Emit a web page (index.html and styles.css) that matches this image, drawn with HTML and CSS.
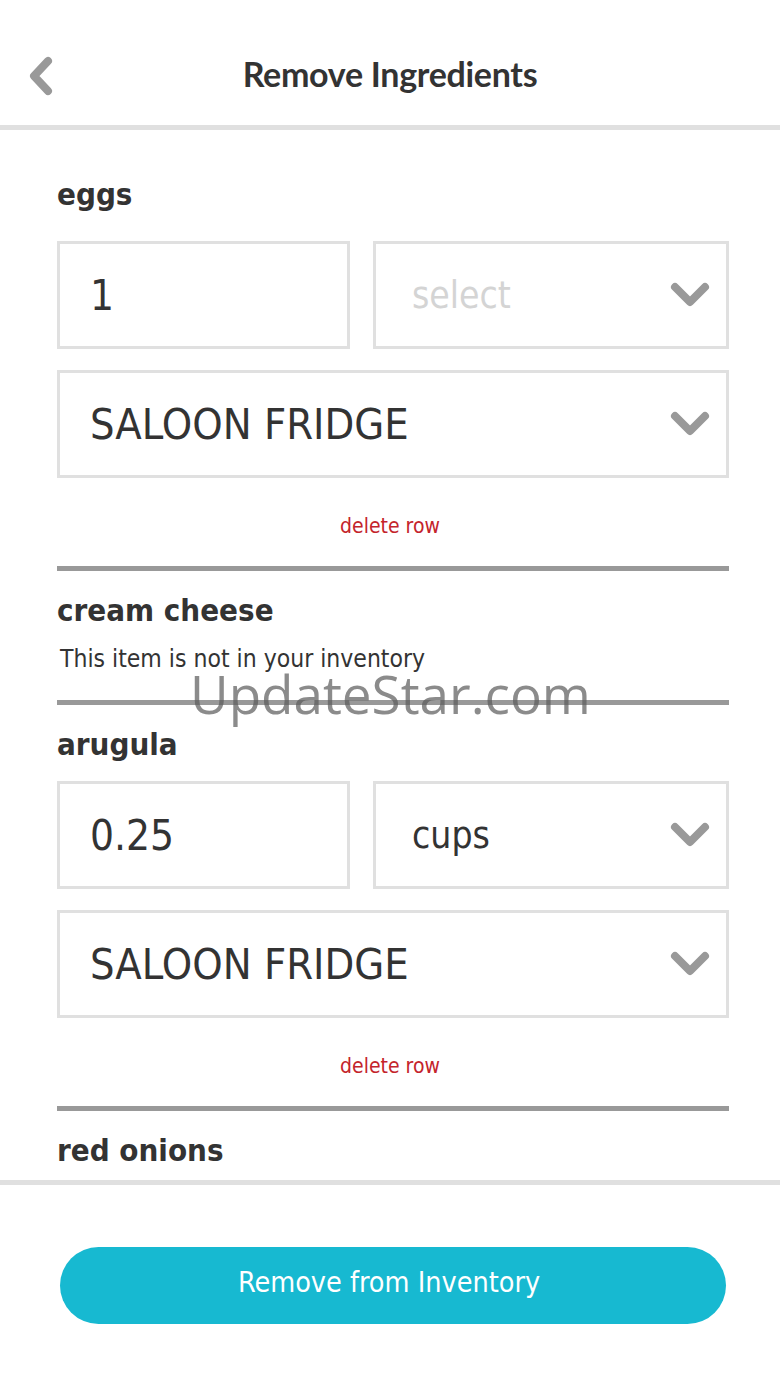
FILE: index.html
```html
<!DOCTYPE html>
<html lang="en">
<head>
  <meta charset="UTF-8">
  <meta name="viewport" content="width=device-width, initial-scale=1.0">
  <title>Remove Ingredients</title>
  <link rel="stylesheet" href="styles.css">
</head>
<body>
  <div class="screen">
    <header class="topbar">
      <button class="back" aria-label="Back">
        <svg width="30" height="40" viewBox="0 0 30 40"><polyline points="20,5 6,20 20,35" fill="none" stroke="#999" stroke-width="8" stroke-linecap="round" stroke-linejoin="round"/></svg>
      </button>
      <h1>Remove Ingredients</h1>
    </header>

    <main class="list">
      <section class="item first">
        <h2 class="item-name">eggs</h2>
        <div class="field-row">
          <div class="field qty">1</div>
          <div class="field unit placeholder">select
            <svg class="chev" width="40" height="26" viewBox="0 0 40 26"><polyline points="5,5 20,20 35,5" fill="none" stroke="#999" stroke-width="8" stroke-linecap="round" stroke-linejoin="round"/></svg>
          </div>
        </div>
        <div class="field location">SALOON FRIDGE
          <svg class="chev" width="40" height="26" viewBox="0 0 40 26"><polyline points="5,5 20,20 35,5" fill="none" stroke="#999" stroke-width="8" stroke-linecap="round" stroke-linejoin="round"/></svg>
        </div>
        <a class="delete" href="#">delete row</a>
      </section>

      <section class="item">
        <h2 class="item-name">cream cheese</h2>
        <p class="note">This item is not in your inventory</p>
      </section>

      <section class="item">
        <h2 class="item-name">arugula</h2>
        <div class="field-row">
          <div class="field qty">0.25</div>
          <div class="field unit">cups
            <svg class="chev" width="40" height="26" viewBox="0 0 40 26"><polyline points="5,5 20,20 35,5" fill="none" stroke="#999" stroke-width="8" stroke-linecap="round" stroke-linejoin="round"/></svg>
          </div>
        </div>
        <div class="field location">SALOON FRIDGE
          <svg class="chev" width="40" height="26" viewBox="0 0 40 26"><polyline points="5,5 20,20 35,5" fill="none" stroke="#999" stroke-width="8" stroke-linecap="round" stroke-linejoin="round"/></svg>
        </div>
        <a class="delete" href="#">delete row</a>
      </section>

      <section class="item">
        <h2 class="item-name">red onions</h2>
      </section>
    </main>

    <footer class="bottombar">
      <button class="remove-btn">Remove from Inventory</button>
    </footer>

    <div class="watermark">UpdateStar.com</div>
  </div>
</body>
</html>
```

FILE: styles.css
```css
body {
  margin: 0;
  background: #fff;
  color: #333;
  font-family: "DejaVu Sans Condensed", "DejaVu Sans", sans-serif;
  font-stretch: condensed;
}

.screen {
  position: relative;
  width: 780px;
  height: 1387px;
  overflow: hidden;
}

.topbar {
  height: 125px;
  border-bottom: 5px solid #e0e0e0;
  display: flex;
  align-items: center;
  justify-content: center;
  position: relative;
}

.topbar h1 {
  margin: 22px 0 0;
  font-family: Lato, "Open Sans", sans-serif;
  font-stretch: normal;
  font-weight: 700;
  font-size: 34px;
  letter-spacing: -0.3px;
  color: #333;
}

.back {
  position: absolute;
  left: 28px;
  top: 56px;
  padding: 0;
  border: none;
  background: none;
}

.back svg {
  display: block;
}

.list {
  height: 1050px;
  overflow: hidden;
  padding: 0 51px 0 57px;
}

.item {
  border-bottom: 5px solid #999;
}

.item:last-child {
  border-bottom: none;
}

.item-name {
  margin: 20px 0 0;
  font-size: 31px;
  line-height: 38px;
  font-weight: 700;
  color: #333;
}

.item.first .item-name {
  margin-top: 45px;
  margin-bottom: 28px;
}

.item-name + .field-row {
  margin-top: 18px;
}

.item.first .item-name + .field-row {
  margin-top: 0;
}

.field-row {
  display: flex;
  gap: 23px;
}

.field {
  position: relative;
  box-sizing: border-box;
  height: 108px;
  border: 3px solid #e0e0e0;
  display: flex;
  align-items: center;
  font-size: 42px;
  color: #333;
  padding-left: 30px;
}

.field.qty {
  flex: 0 0 293px;
}

.field.unit {
  flex: 1;
  font-size: 37px;
  padding-left: 36px;
}

.field.placeholder {
  color: #d4d4d4;
}

.field.location {
  margin-top: 21px;
  font-size: 43px;
}

.chev {
  position: absolute;
  right: 16px;
  top: 38px;
}

.delete {
  display: block;
  margin: 35px 6px 27px 0;
  text-align: center;
  font-size: 21px;
  line-height: 26px;
  color: #c4242b;
  text-decoration: none;
}

.note {
  margin: 16px 0 27px 3px;
  font-size: 24.5px;
  line-height: 28px;
  color: #333;
}

.bottombar {
  border-top: 5px solid #e0e0e0;
  padding: 62px 54px 0 60px;
}

.remove-btn {
  display: block;
  width: 100%;
  height: 77px;
  border: none;
  border-radius: 39px;
  background: #17b9d1;
  color: #fff;
  font-family: "DejaVu Sans Condensed", "DejaVu Sans", sans-serif;
  font-stretch: condensed;
  font-size: 28.5px;
  padding: 0 8px 6px 0;
}

.watermark {
  position: absolute;
  left: 190px;
  top: 658px;
  font-family: "Open Sans", sans-serif;
  font-stretch: normal;
  font-size: 53px;
  line-height: 72px;
  color: rgba(90, 90, 90, 0.7);
  pointer-events: none;
}
```
